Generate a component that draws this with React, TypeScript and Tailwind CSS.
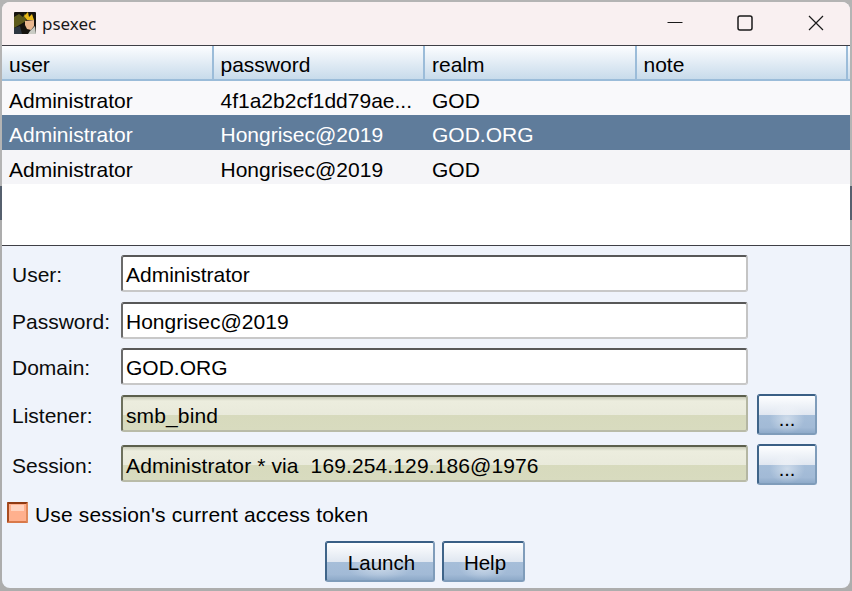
import React from "react";

const FONT = "font-['Liberation_Sans',Arial,sans-serif]";

const COLUMNS = ["user", "password", "realm", "note"];

const ROWS = [
  { user: "Administrator", password: "4f1a2b2cf1dd79ae...", realm: "GOD", cls: "h-[34px] bg-[#f9f9fb] text-black" },
  { user: "Administrator", password: "Hongrisec@2019", realm: "GOD.ORG", cls: "h-[35px] bg-[#5f7c9b] text-white" },
  { user: "Administrator", password: "Hongrisec@2019", realm: "GOD", cls: "h-[34px] bg-[#f5f5f8] text-black" },
];

const glossyButton =
  "flex items-center justify-center rounded-[3px] border-2 border-t-[#3a5f85] border-l-[#3f6489] border-r-[#7f9cba] border-b-[#7f9cba] bg-[radial-gradient(ellipse_at_50%_62%,rgba(255,255,255,0.45)_0%,rgba(255,255,255,0)_45%),linear-gradient(to_bottom,#fdfeff_0%,#dfe6f0_52%,#a6bed9_52%,#a2bad6_85%,#8eaac9_100%)] text-black";

function Field({ label, value, combo, top, hasButton }: { label: string; value: string; combo?: boolean; top: string; hasButton?: boolean }) {
  return (
    <div className={`flex items-center ${top}`}>
      <div className="w-[119px] pl-[10px] pt-[2px] text-[21px] leading-none text-[#0b0b0b]">{label}</div>
      <div
        className={`flex h-[37px] w-[627px] items-center whitespace-pre rounded-[3px] border-2 pl-[3px] text-[21px] leading-none text-black ${
          combo
            ? "mb-[2px] pt-[3px] tracking-[0.12px] border-t-[#5c5f4c] border-l-[#6d705c] border-r-[#b4b6a2] border-b-[#b9bba8] bg-[linear-gradient(to_bottom,#c9cbb8_0%,#ecedde_12%,#e9eadb_55%,#d7dabd_55%,#d8dbbf_100%)]"
            : "pt-[1px] border-t-[#585858] border-l-[#6a6a6a] border-r-[#c4c4c4] border-b-[#c8c8c8] bg-white"
        }`}
      >
        {value}
      </div>
      {hasButton && (
        <div className={`ml-[9px] h-[41px] w-[60px] pt-[8px] text-[20px] leading-none ${glossyButton}`}>...</div>
      )}
    </div>
  );
}

export default function App() {
  return (
    <div
      className={`h-[591px] w-[852px] overflow-hidden bg-[linear-gradient(to_bottom,#b4b4b4_0,#b4b4b4_186px,#56606e_186px,#56606e_220px,#adadad_220px,#adadad_100%)] pl-[2px] pt-[2px] ${FONT}`}
    >
      <div className="flex h-[586px] w-[848px] flex-col overflow-hidden rounded-[8px] bg-[#eff3fb]">
        {/* title bar */}
        <div className="flex h-[43px] shrink-0 items-center bg-[#f9f0f1]">
          <svg className="ml-[12px] mt-[-1px]" width="22" height="22" viewBox="0 0 22 22">
            <rect width="22" height="22" rx="1" fill="#15130e" />
            <path d="M0 5 L5 2 L9 5 L11 1 L12 9 L7 12 L0 16 Z" fill="#5d5a1c" />
            <path d="M10 4 L14 0 L15 5 L18 2 L20 8 L13 8 Z" fill="#e8b818" />
            <path d="M11 9 L20 8 L20 14 L17 18 L13 17 L11 13 Z" fill="#e9b78f" />
            <path d="M16 19 L21 14 L22 22 L14 22 Z" fill="#c9cbc4" />
            <path d="M0 16 L6 14 L8 22 L0 22 Z" fill="#2c3640" />
          </svg>
          <span className="ml-[6px] font-['Noto_Sans',sans-serif] text-[17px] leading-none text-[#1a1a1a]">psexec</span>
          <div className="ml-auto flex items-center">
            <svg width="16" height="16" viewBox="0 0 16 16" className="mr-[54px] mt-[-3px]">
              <path d="M0.5 8.5 H15.5" stroke="#1a1a1a" strokeWidth="1" />
            </svg>
            <svg width="16" height="16" viewBox="0 0 16 16" className="mr-[55px] mt-[-2px]">
              <rect x="1" y="1" width="14" height="14" rx="2" fill="none" stroke="#1a1a1a" strokeWidth="1.5" />
            </svg>
            <svg width="16" height="16" viewBox="0 0 16 16" className="mr-[26px] mt-[-2px]">
              <path d="M1 1 L15 15 M15 1 L1 15" stroke="#1a1a1a" strokeWidth="1.2" />
            </svg>
          </div>
        </div>

        {/* table */}
        <div className="h-[201px] shrink-0 border-y border-[#3f3f46] bg-white">
          <div className="flex h-[35px] border-b-2 border-[#9bbcd9] bg-[linear-gradient(to_bottom,#fcfdff_0%,#c8dbeb_100%)]">
            {COLUMNS.map((c) => (
              <div key={c} className="flex w-[211.5px] items-center border-r-2 border-[#9bbcd9] pl-[7px] pt-[4px] text-[21px] leading-none text-black">
                {c}
              </div>
            ))}
          </div>
          {ROWS.map((r, i) => (
            <div key={i} className={`flex items-center pt-[4px] text-[21px] leading-none ${r.cls}`}>
              <div className="w-[211.5px] pl-[7px]">{r.user}</div>
              <div className="w-[211.5px] pl-[7px]">{r.password}</div>
              <div className="w-[211.5px] pl-[7px]">{r.realm}</div>
            </div>
          ))}
        </div>

        {/* form */}
        <div className="flex flex-col">
          <Field label="User:" value="Administrator" top="mt-[9px]" />
          <Field label="Password:" value="Hongrisec@2019" top="mt-[10px]" />
          <Field label="Domain:" value="GOD.ORG" top="mt-[9px]" />
          <Field label="Listener:" value="smb_bind" combo hasButton top="mt-[9px]" />
          <Field label="Session:" value="Administrator * via  169.254.129.186@1976" combo hasButton top="mt-[9px]" />
          <div className="mt-[17px] flex h-[21px] items-center pl-[5px]">
            <div className="h-[21px] w-[21px] shrink-0 rounded-[1px] border-2 border-t-[#8f3a12] border-l-[#a84c20] border-r-[#e08a5c] border-b-[#d9794a] bg-[#ffb08e] px-[2px] pt-px">
              <div className="h-[6px] bg-[#ffd3bf]" />
            </div>
            <span className="ml-[7px] pt-[4px] text-[21px] leading-none tracking-[0.14px] text-black">Use session's current access token</span>
          </div>
          <div className="mt-[18px] flex justify-center gap-[7px] pr-[2px]">
            <div className={`h-[41px] w-[110px] pl-[3px] pt-[3px] text-[20.5px] leading-none ${glossyButton}`}>Launch</div>
            <div className={`h-[41px] w-[83px] pl-[3px] pt-[3px] text-[20.5px] leading-none ${glossyButton}`}>Help</div>
          </div>
        </div>
      </div>
    </div>
  );
}
